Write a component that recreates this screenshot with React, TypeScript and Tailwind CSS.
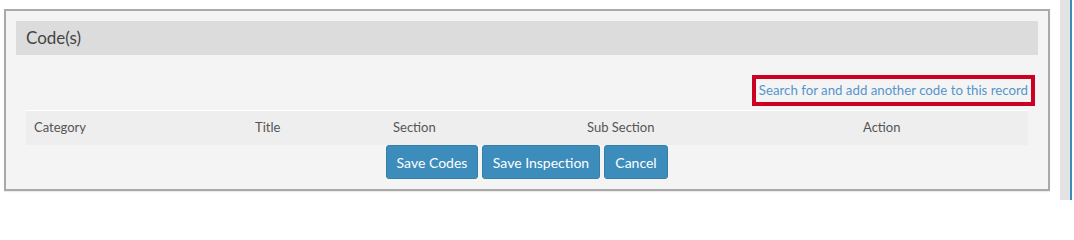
import React from 'react';

const columns = ['Category', 'Title', 'Section', 'Sub Section', 'Action'];

const buttons = [
    { label: 'Save Codes', w: 'w-[92px]' },
    { label: 'Save Inspection', w: 'w-[118px]' },
    { label: 'Cancel', w: 'w-[64px]' },
];

export default function App() {
    return (
        <div className="flex h-[200px] w-[1074px] overflow-hidden bg-white font-['Lato',sans-serif]">
            {/* Codes panel */}
            <div className="ml-[4px] mt-[9px] h-[182px] w-[1046px] border-2 border-[#a9a9a9] bg-[#f4f4f4] p-[10px] shadow-[0_1px_1px_rgba(0,0,0,0.08)]">
                <div className="flex h-[34px] items-center bg-[#dcdcdc] pl-[10px] text-[17px] text-[#444]">
                    Code(s)
                </div>

                <div className="px-[10px]">
                    <div className="mt-[20px] flex justify-end">
                        <div className="mr-[-7px] border-4 border-[#cc0022] px-[3px] py-[3px]">
                            <a href="#" className="block text-[13.25px] leading-[17px] text-[#5494cc]">
                                Search for and add another code to this record
                            </a>
                        </div>
                    </div>

                    <div className="mt-[4px] grid h-[35px] grid-cols-[221px_138px_194px_276px_1fr] items-center border-t border-white bg-[#eeeeee] text-[13px] text-[#555]">
                        {columns.map((c) => (
                            <div key={c} className="pl-[8px]">{c}</div>
                        ))}
                    </div>

                    <div className="flex justify-center gap-[4px]">
                        {buttons.map((b) => (
                            <button
                                key={b.label}
                                className={`${b.w} h-[34px] rounded-[3px] border border-[#367fa9] bg-[#3c8dbc] text-[14px] text-white`}
                            >
                                {b.label}
                            </button>
                        ))}
                    </div>
                </div>
            </div>

            {/* right edge strip */}
            <div className="ml-[10px] h-[200px] w-[12px] border-r-2 border-[#3c8dbc] bg-[#e3e3e3]" />
        </div>
    );
}
